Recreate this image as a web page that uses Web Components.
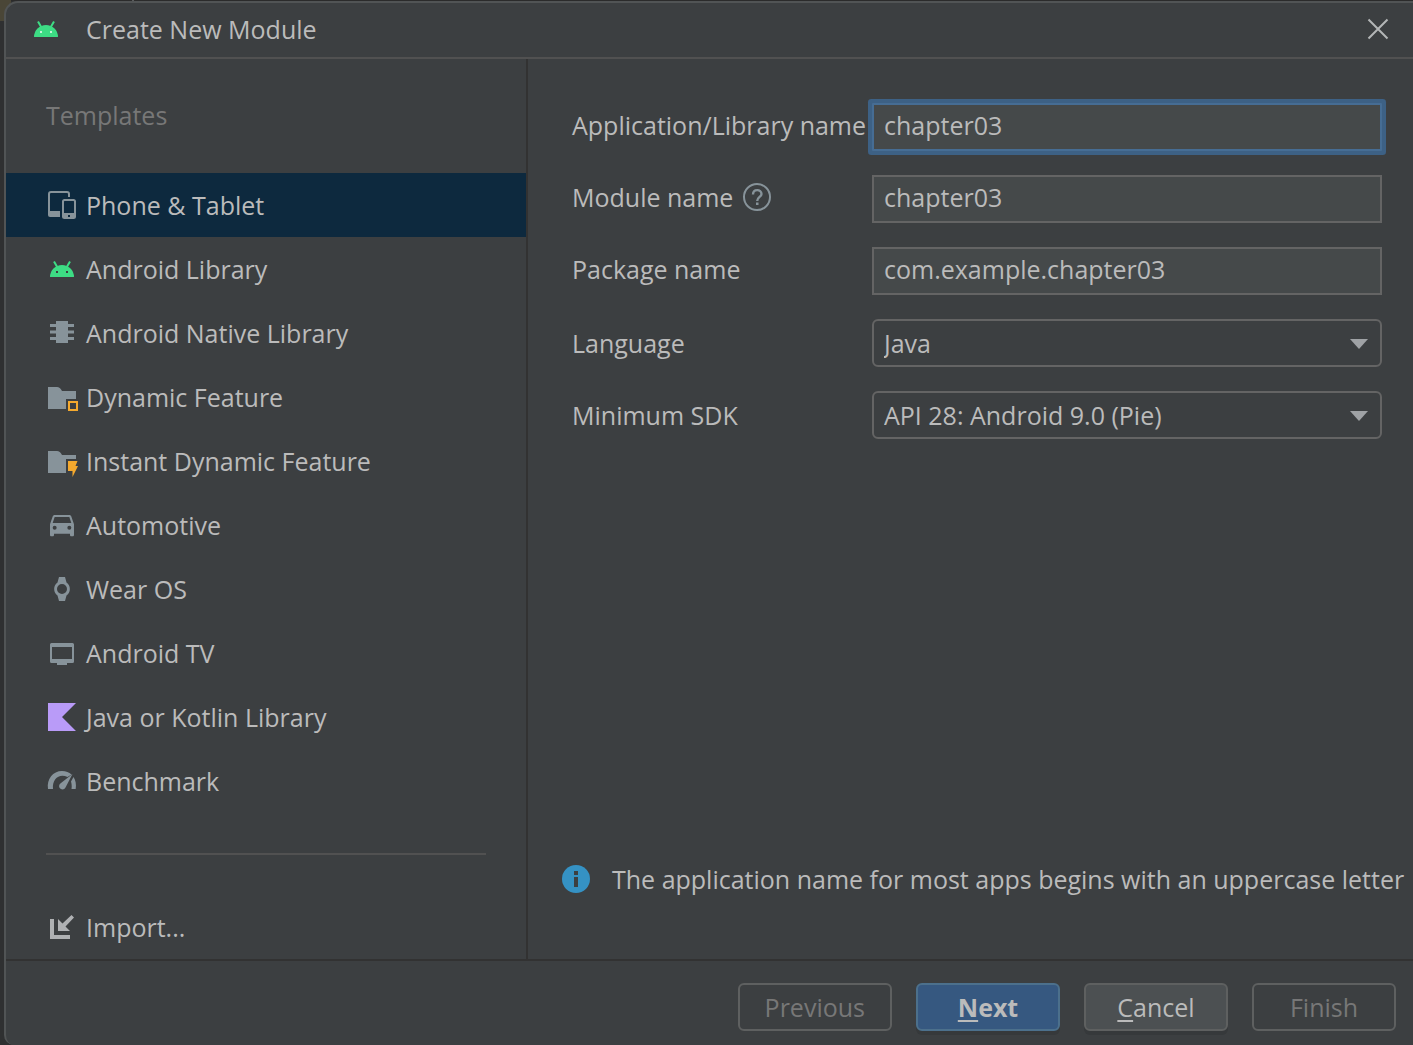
<!DOCTYPE html>
<html lang="en">
<head>
<meta charset="utf-8">
<title>Create New Module</title>
<style>
  html { background: #2f3031; }
  body {
    margin: 0;
    font: 25px/32px "Open Sans", "Noto Sans", sans-serif;
    color: #bbbbbb;
  }
</style>
</head>
<body>
<module-dialog></module-dialog>
<script>
const ICONS = {
  android: `<g fill="#3ddc84"><path d="M2 22a12 12 0 0 1 24 0z"/><path d="M6 6.500l3.500 6M22 6.500l-3.500 6" stroke="#3ddc84" stroke-width="2"/></g><path fill="var(--eye, #3c3f41)" d="M8 16h2v2h-2zM18 16h2v2h-2z"/>`,
  devices: `<path fill="none" stroke="#87939a" stroke-width="2" d="M1 21V3a2 2 0 0 1 2-2h16a2 2 0 0 1 2 2v3"/><path fill="#87939a" d="M0 20h12v6H2a2 2 0 0 1-2-2z"/><rect x="15" y="9" width="12" height="18" rx="1.500" fill="none" stroke="#87939a" stroke-width="2"/><path fill="#87939a" fill-rule="evenodd" d="M15 22h12v5H15zM20 24v2h2v-2z"/>`,
  chip: `<path fill="#87939a" d="M8 2h12v22H8zM2 5h24v3H2zM2 11.500h24v3H2zM2 18h24v3H2z"/>`,
  dynamic: `<path fill="#87939a" d="M0 4h9q3 0 5 4h14v8H18v10H0z"/><path fill="none" stroke="#f4a92e" stroke-width="2" d="M21 19h8v8h-8z"/>`,
  instant: `<path fill="#87939a" d="M0 4h9q3 0 5 4h14v4H18v14H0z"/><path fill="#f4a92e" d="M20 14h9.500L27.500 19H30L24.500 30V24H20z"/>`,
  car: `<path transform="translate(-2 -2.670) scale(1.333)" fill="#87939a" d="M18.920 6.010C18.720 5.420 18.160 5 17.500 5h-11c-.66 0-1.210.42-1.420 1.010L3 12v8c0 .55.45 1 1 1h1c.55 0 1-.45 1-1v-1h12v1c0 .55.45 1 1 1h1c.55 0 1-.45 1-1v-8zM6.500 16a1.500 1.500 0 1 1 0-3 1.500 1.500 0 0 1 0 3zm11 0a1.500 1.500 0 1 1 0-3 1.500 1.500 0 0 1 0 3zM5 11l1.500-4.500h11L19 11z"/>`,
  watch: `<path fill="#87939a" fill-rule="evenodd" d="M11 2h6l1.500 5.500A8 8 0 0 1 18.500 20.500L17 26h-6l-1.500-5.500A8 8 0 0 1 9.500 7.500zM14 9a5 5 0 1 0 0 10a5 5 0 0 0 0-10z"/>`,
  tv: `<path fill="#87939a" fill-rule="evenodd" d="M3.500 4h21a1.500 1.500 0 0 1 1.500 1.500v17a1.500 1.500 0 0 1-1.500 1.500H19v2H9v-2H3.500A1.500 1.500 0 0 1 2 22.500v-17A1.500 1.500 0 0 1 3.500 4zM4 8v12h20V8z"/>`,
  kotlin: `<path fill="#b99bf8" d="M0 0h28L14 14l14 14H0z"/>`,
  gauge: `<path fill="#87939a" d="M0 22C-1.500 12 5 4 14 4c4 0 7 1.300 9.500 3.500L19.500 10C12 6 4 11 5 22zM25.500 10C27.500 13 28.500 17 27.700 22H23.500C24 18.500 23.500 16.500 23 14.500zM24.500 7L17.500 20.500C15.500 24.500 9.500 21.500 11.500 17.500Q12 16.800 13 16z"/>`,
  import: `<path fill="#afb1b3" d="M2 6h4v16h16v4H2zM10 6l4.500 4.500L23.500 2l2.500 2.500-8.500 9L22 18H10z"/>`,
  help: `<circle cx="14" cy="14" r="13" fill="none" stroke="#87939a" stroke-width="2"/><path fill="none" stroke="#87939a" stroke-width="2.400" d="M10 11.500c0-6 8.500-5.500 8.500-.6 0 3.100-4.300 3-4.300 7.100"/><path fill="#87939a" d="M13 19.500h2.500V22H13z"/>`,
  info: `<circle cx="14" cy="14" r="14" fill="#3592c4"/><path fill="#3c3f41" d="M12 6h4v4h-4zM12 12h4v10h-4z"/>`,
  close: `<path fill="none" stroke="#b4b6b7" stroke-width="2" d="M4.500 4.500l19 19M23.500 4.500l-19 19"/>`
};

class UiIcon extends HTMLElement {
  connectedCallback() {
    this.attachShadow({ mode: "open" }).innerHTML = `
      <style>
        :host { display: block; flex: none; width: 28px; height: 28px; }
        svg { display: block; overflow: visible; }
      </style>
      <svg width="28" height="28" viewBox="0 0 28 28" aria-hidden="true">${ICONS[this.getAttribute("name")]}</svg>`;
  }
}

class TemplateItem extends HTMLElement {
  connectedCallback() {
    this.attachShadow({ mode: "open" }).innerHTML = `
      <style>
        :host { display: block; }
        button {
          display: flex; align-items: center; gap: 10px;
          width: 100%; height: 64px; padding: 0 42px; border: 0;
          background: none; color: inherit; font: inherit; text-align: left; white-space: nowrap;
        }
        :host([selected]) button { background: #0d293e; }
      </style>
      <button type="button"><ui-icon name="${this.getAttribute("icon")}"></ui-icon><span><slot></slot></span></button>`;
  }
}

class FormField extends HTMLElement {
  connectedCallback() {
    const value = this.getAttribute("value");
    const control = this.hasAttribute("choice")
      ? `<select id="control"><option>${value}</option></select>
         <svg width="18" height="10" viewBox="0 0 18 10" aria-hidden="true"><path fill="#9fa2a5" d="M0 0h18L9 10z"/></svg>`
      : `<input id="control" type="text" value="${value}" spellcheck="false">`;
    this.attachShadow({ mode: "open" }).innerHTML = `
      <style>
        :host { display: grid; grid-template-columns: 300px minmax(0, 1fr); align-items: center; }
        .caption { display: flex; align-items: center; gap: 10px; padding-bottom: 4px; white-space: nowrap; }
        :host([choice]) .caption { padding-bottom: 0; }
        .box { display: grid; align-items: center; }
        input, select {
          grid-area: 1 / 1; box-sizing: border-box; width: 100%; height: 48px; margin: 0; padding: 0 10px 4px;
          border: 2px solid #646464; border-radius: 0; outline: 0; appearance: none;
          background: #45494a; color: inherit; font: inherit;
        }
        select { padding-bottom: 0; background: #3c3f41; border-radius: 6px; }
        svg { grid-area: 1 / 1; justify-self: end; margin: 2px 14px 0 0; pointer-events: none; }
        :host([active]) input { border-color: #466d94; box-shadow: 0 0 0 4px #3d6185; border-radius: 1px; }
      </style>
      <div class="caption"><label for="control">${this.getAttribute("label")}</label><slot></slot></div>
      <div class="box">${control}</div>`;
  }
}

class DialogButton extends HTMLElement {
  connectedCallback() {
    this.attachShadow({ mode: "open" }).innerHTML = `
      <style>
        :host { display: block; }
        button {
          box-sizing: border-box; min-width: 144px; height: 48px; padding: 0 25px;
          border: 2px solid #5e6060; border-radius: 6px;
          background: #4c5052; color: #bbbbbb; font: inherit; box-shadow: 0 4px 0 #36393b;
        }
        button:disabled { background: none; color: #777777; box-shadow: none; }
        :host([primary]) button { background: #365880; border-color: #4c708c; font-weight: 700; }
        ::slotted(u) { text-decoration-thickness: 2px; text-underline-offset: 3px; }
      </style>
      <button type="button" ${this.hasAttribute("disabled") ? "disabled" : ""}><slot></slot></button>`;
  }
}

class ModuleDialog extends HTMLElement {
  connectedCallback() {
    this.attachShadow({ mode: "open" }).innerHTML = `
      <style>
        :host {
          display: flex; box-sizing: border-box; min-height: 100vh; padding: 1px 0 0 4px;
          background:
            linear-gradient(#4a4637, #4a4637) 0 0 / 11px 21px no-repeat,
            linear-gradient(#5a5c5d, #5a5c5d) 132px 0 / 2px 1px no-repeat,
            linear-gradient(#2b2b2b, #2b2b2b) 0 0 / 100% 1px no-repeat,
            #2f3031;
        }
        .window {
          flex: 1; min-width: 0; display: flex; flex-direction: column;
          border: 2px solid #515455; border-width: 2px 0 0 2px; border-radius: 14px 0 0 10px;
          background: #3c3f41; overflow: hidden;
        }
        header {
          display: flex; align-items: center; gap: 26px; height: 52px; padding: 0 21px 2px 26px;
          border-bottom: 2px solid #515151;
        }
        header ui-icon { --eye: #c5f3da; }
        h1 { flex: 1; margin: 0; font: inherit; }
        .close { padding: 0; border: 0; background: none; }
        main { flex: 1; display: flex; }
        nav { flex: none; width: 520px; border-right: 2px solid #323232; }
        h2 { display: flex; align-items: center; height: 112px; margin: 0; padding: 0 40px 2px; font: inherit; color: #777777; }
        hr { height: 2px; margin: 40px; border: 0; background: #515151; }
        section { flex: 1; min-width: 0; display: flex; flex-direction: column; }
        form { display: grid; gap: 24px; padding: 44px 31px 0 44px; }
        .hint { display: flex; align-items: center; gap: 22px; margin: auto 0 0; padding: 0 0 64px 34px; white-space: nowrap; }
        footer { display: flex; justify-content: flex-end; gap: 24px; padding: 22px 17px 14px; border-top: 2px solid #323232; }
      </style>
      <div class="window">
        <header>
          <ui-icon name="android"></ui-icon>
          <h1>Create New Module</h1>
          <button class="close" type="button" aria-label="Close"><ui-icon name="close"></ui-icon></button>
        </header>
        <main>
          <nav>
            <h2>Templates</h2>
            <template-item icon="devices" selected>Phone &amp; Tablet</template-item>
            <template-item icon="android">Android Library</template-item>
            <template-item icon="chip">Android Native Library</template-item>
            <template-item icon="dynamic">Dynamic Feature</template-item>
            <template-item icon="instant">Instant Dynamic Feature</template-item>
            <template-item icon="car">Automotive</template-item>
            <template-item icon="watch">Wear OS</template-item>
            <template-item icon="tv">Android TV</template-item>
            <template-item icon="kotlin">Java or Kotlin Library</template-item>
            <template-item icon="gauge">Benchmark</template-item>
            <hr>
            <template-item icon="import">Import...</template-item>
          </nav>
          <section>
            <form>
              <form-field label="Application/Library name" value="chapter03" active></form-field>
              <form-field label="Module name" value="chapter03"><ui-icon name="help"></ui-icon></form-field>
              <form-field label="Package name" value="com.example.chapter03"></form-field>
              <form-field label="Language" value="Java" choice></form-field>
              <form-field label="Minimum SDK" value="API 28: Android 9.0 (Pie)" choice></form-field>
            </form>
            <p class="hint"><ui-icon name="info"></ui-icon><span>The application name for most apps begins with an uppercase letter</span></p>
          </section>
        </main>
        <footer>
          <dialog-button disabled>Previous</dialog-button>
          <dialog-button primary><u>N</u>ext</dialog-button>
          <dialog-button><u>C</u>ancel</dialog-button>
          <dialog-button disabled>Finish</dialog-button>
        </footer>
      </div>`;
  }
}

customElements.define("ui-icon", UiIcon);
customElements.define("template-item", TemplateItem);
customElements.define("form-field", FormField);
customElements.define("dialog-button", DialogButton);
customElements.define("module-dialog", ModuleDialog);
</script>
</body>
</html>
